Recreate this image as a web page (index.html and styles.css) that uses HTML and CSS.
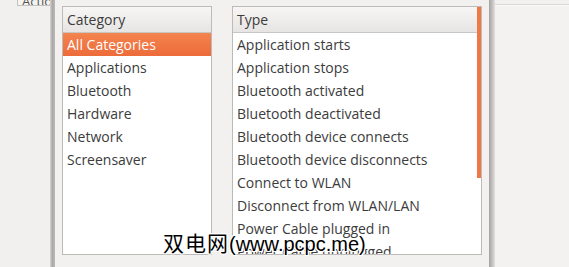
FILE: index.html
```html
<!DOCTYPE html>
<html lang="en">

<head>
    <meta charset="UTF-8">
    <title>Notifications</title>
    <link rel="stylesheet" href="styles.css">
</head>

<body>
    <div class="desk">
        <div class="behind-left">
            <div class="tab">Actions</div>
        </div>
        <div class="edge-left"></div>

        <div class="dialog">
            <div class="list category">
                <div class="list-head">Category</div>
                <div class="row selected">All Categories</div>
                <div class="row">Applications</div>
                <div class="row">Bluetooth</div>
                <div class="row">Hardware</div>
                <div class="row">Network</div>
                <div class="row">Screensaver</div>
            </div>

            <div class="list type">
                <div class="list-body">
                    <div class="list-head">Type</div>
                    <div class="row">Application starts</div>
                    <div class="row">Application stops</div>
                    <div class="row">Bluetooth activated</div>
                    <div class="row">Bluetooth deactivated</div>
                    <div class="row">Bluetooth device connects</div>
                    <div class="row">Bluetooth device disconnects</div>
                    <div class="row">Connect to WLAN</div>
                    <div class="row">Disconnect from WLAN/LAN</div>
                    <div class="row">Power Cable plugged in</div>
                    <div class="row">Power Cable unplugged</div>
                </div>
                <div class="scroll">
                    <div class="thumb"></div>
                </div>
            </div>
        </div>

        <div class="edge-right"></div>
        <div class="behind-right"></div>
    </div>

    <div class="watermark">双电网<span class="site">(www.pcpc.me)</span></div>
</body>

</html>
```

FILE: styles.css
```css
* {
    margin: 0;
    padding: 0;
    box-sizing: border-box;
}

body {
    background: #f2f1f0;
    font-family: "Open Sans", "DejaVu Sans", sans-serif;
    font-size: 14px;
    color: #3c3c3c;
    width: 569px;
    height: 267px;
    overflow: hidden;
    position: relative;
}

.desk {
    display: flex;
    height: 267px;
}

.behind-left {
    width: 50px;
    background: #f1f0ef;
    padding-left: 17px;
}

.tab {
    width: 36px;
    height: 6px;
    border: 1px solid #c4c2bf;
    border-top: none;
    background: #f5f4f3;
    font-size: 13px;
    line-height: 2px;
    color: #555;
    overflow: hidden;
    text-indent: 4px;
}

.edge-left {
    width: 5px;
    background: linear-gradient(to right, #d6d5d3, #a9a8a6, #bcbbb9);
}

.dialog {
    width: 434px;
    background: #f2f1f0;
    display: flex;
    gap: 20px;
    padding: 6px 0 0 7px;
}

.edge-right {
    width: 6px;
    background: linear-gradient(to right, #a5a4a2, #c0bfbd, #e2e1df);
}

.behind-right {
    flex: 1;
    background: #f3f2f1;
    border-top: 1px solid #fafaf9;
    margin-top: 5px;
    box-shadow: 0 -1px 0 #d9d8d6;
}

.list {
    height: 249px;
    background: #fff;
    border: 1px solid #bdbbb8;
    overflow: hidden;
}

.category {
    width: 150px;
}

.type {
    width: 250px;
    display: flex;
}

.list-body {
    flex: 1;
}

.list-head {
    height: 26px;
    line-height: 25px;
    padding-left: 4px;
    background: linear-gradient(#f7f6f5, #e6e5e3);
    border-bottom: 1px solid #c9c7c4;
}

.row {
    height: 23px;
    line-height: 23px;
    padding-left: 4px;
    white-space: nowrap;
}

.row.selected {
    background: linear-gradient(#f4844f, #ec6b3a);
    color: #fff;
}

.scroll {
    width: 4px;
}

.thumb {
    height: 171px;
    background: #f07746;
}

.watermark {
    position: absolute;
    left: 163px;
    top: 229px;
    font-family: "Noto Sans CJK SC", sans-serif;
    font-size: 21px;
    line-height: 26px;
    color: #000;
    letter-spacing: 1px;
    white-space: nowrap;
    text-shadow: 1px 0 0 #fff, -1px 0 0 #fff, 0 1px 0 #fff, 0 -1px 0 #fff,
        1px 1px 0 #fff, -1px -1px 0 #fff, 1px -1px 0 #fff, -1px 1px 0 #fff;
}

.site {
    font-family: "Liberation Sans", sans-serif;
    font-size: 20px;
    letter-spacing: 0;
}
```
